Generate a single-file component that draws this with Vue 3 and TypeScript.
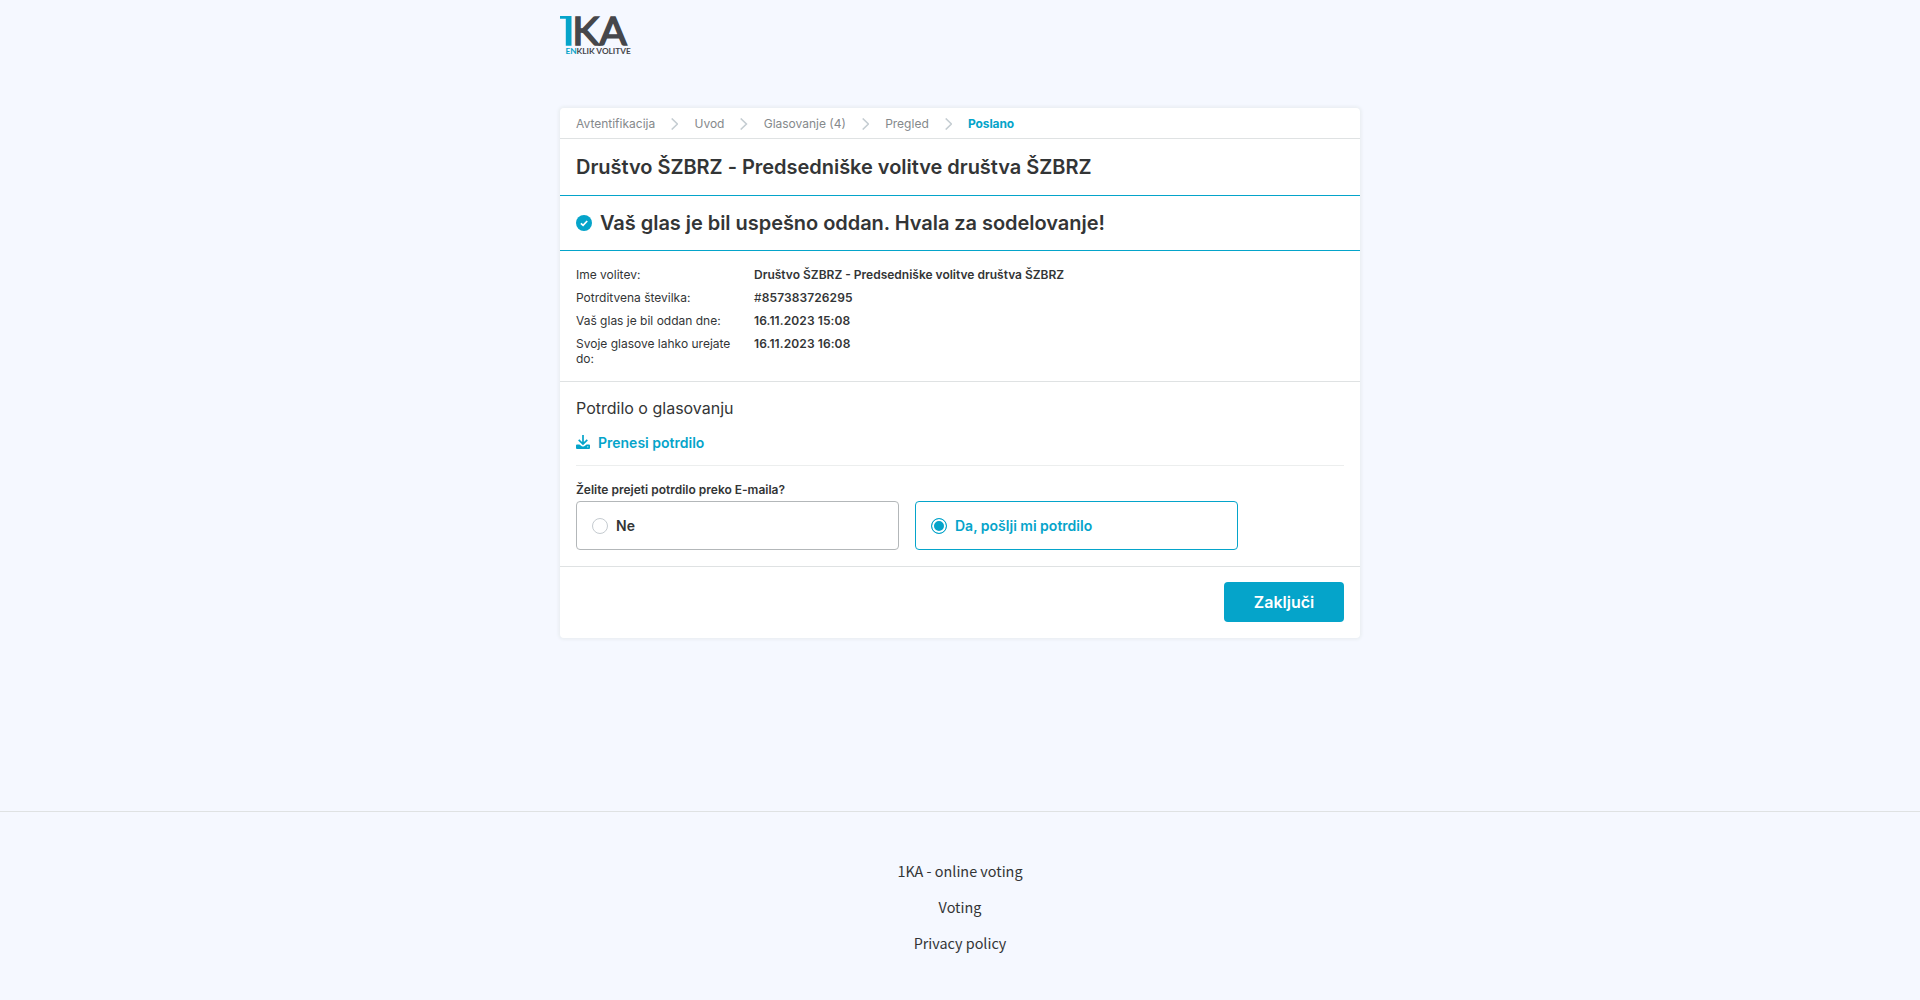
<template>
  <div class="page">
    <header class="header">
      <svg class="logo" width="72" height="42" viewBox="0 0 72 42" role="img" aria-label="1KA">
        <path d="M0 2h11.5v29.8H5.8V4.8H0z" fill="#05a4ca" />
        <text x="12.2" y="31.2" class="logo-main" textLength="54.5" lengthAdjust="spacingAndGlyphs">KA</text>
        <text x="5.4" y="40.2" class="logo-sub" textLength="65.4" lengthAdjust="spacingAndGlyphs"><tspan class="teal">EN</tspan>KLIK VOLITVE</text>
      </svg>
    </header>

    <main class="card">
      <nav class="steps">
        <template v-for="(step, idx) in steps" :key="step">
          <svg v-if="idx > 0" class="chevron" width="7.25" height="12" viewBox="0 0 7.25 12">
            <path d="M0.7 0.5L6.4 6L0.7 11.5" fill="none" stroke="#c5cdd2" stroke-width="1.6" />
          </svg>
          <span class="step" :class="{ active: step === currentStep }">{{ step }}</span>
        </template>
      </nav>

      <h1 class="title">{{ electionName }}</h1>

      <div class="success">
        <svg width="16" height="16" viewBox="0 0 16 16">
          <circle cx="8" cy="8" r="8" fill="#05a4ca" />
          <path d="M4.9 8.3L7.1 10.4L11.2 6" fill="none" stroke="#fff" stroke-width="1.7" />
        </svg>
        <span>Vaš glas je bil uspešno oddan. Hvala za sodelovanje!</span>
      </div>

      <dl class="details">
        <div v-for="row in details" :key="row.label" class="row">
          <dt>{{ row.label }}</dt>
          <dd :class="{ numeric: row.numeric }"><span v-if="row.prefix" class="prefix">{{ row.prefix }}</span>{{ row.value }}</dd>
        </div>
      </dl>

      <section class="receipt">
        <h2>Potrdilo o glasovanju</h2>
        <a class="download" href="#" @click.prevent>
          <svg width="14" height="14" viewBox="0 0 14 14">
            <path d="M7 0v8.6M2.7 4.9L7 9L11.3 4.9" fill="none" stroke="#05a4ca" stroke-width="1.7" />
            <path d="M1 9.4h2.4L5.8 11.2Q7 11.9 8.2 11.2L10.6 9.4H13Q14 9.4 14 10.4V13Q14 14 13 14H1Q0 14 0 13V10.4Q0 9.4 1 9.4z" fill="#05a4ca" />
            <circle cx="11.8" cy="11.8" r="0.6" fill="#fff" />
          </svg>
          <span>Prenesi potrdilo</span>
        </a>
        <div class="question">Želite prejeti potrdilo preko E-maila?</div>
        <div class="options">
          <label v-for="o in options" :key="o.value" class="option" :class="{ selected: answer === o.value }">
            <input v-model="answer" type="radio" name="email" :value="o.value" />
            <span class="radio"></span>
            <span>{{ o.label }}</span>
          </label>
        </div>
      </section>

      <div class="actions">
        <button type="button">Zaključi</button>
      </div>
    </main>

    <footer class="footer">
      <a v-for="link in links" :key="link" href="#" @click.prevent>{{ link }}</a>
    </footer>
  </div>
</template>

<script setup lang="ts">
import { ref } from 'vue'

interface Detail { label: string; value: string; prefix?: string; numeric?: boolean }
interface Option { value: string; label: string }

const electionName = 'Društvo ŠZBRZ - Predsedniške volitve društva ŠZBRZ'
const steps = ['Avtentifikacija', 'Uvod', 'Glasovanje (4)', 'Pregled', 'Poslano']
const currentStep = ref('Poslano')

const details: Detail[] = [
  { label: 'Ime volitev:', value: electionName },
  { label: 'Potrditvena številka:', prefix: '#', value: '857383726295', numeric: true },
  { label: 'Vaš glas je bil oddan dne:', value: '16.11.2023 15:08', numeric: true },
  { label: 'Svoje glasove lahko urejate do:', value: '16.11.2023 16:08', numeric: true }
]

const options: Option[] = [
  { value: 'no', label: 'Ne' },
  { value: 'yes', label: 'Da, pošlji mi potrdilo' }
]
const answer = ref('yes')

const links = ['1KA - online voting', 'Voting', 'Privacy policy']
</script>

<style>
body { margin: 0; background: #f5f8ff; }
</style>

<style scoped>
* { box-sizing: border-box; }
.page { height: 1000px; display: flex; flex-direction: column; font-family: Inter, "Liberation Sans", sans-serif; color: #333536; overflow: hidden; }
.header { width: 800px; height: 108px; margin: 0 auto; padding-top: 14px; flex: none; }
.logo { display: block; overflow: visible; }
.logo-main { font: 400 39.5px Lato, sans-serif; fill: #46474b; stroke: #46474b; stroke-width: 1.5; }
.logo-sub { font: 700 7.6px Lato, sans-serif; fill: #46474b; }
.logo-sub .teal { fill: #05a4ca; }

.card { width: 800px; height: 530px; margin: 0 auto; background: #fff; border-radius: 4px; box-shadow: 0 0 3px 2px #ebeff4; flex: none; }
.steps { height: 31px; padding: 1px 16px 0; display: flex; align-items: center; gap: 16px; border-bottom: 1px solid #dfe2e3; font-size: 12px; color: #85898c; }
.step { line-height: 16px; position: relative; top: 0.5px; }
.step.active { color: #05a4ca; font-weight: 700; letter-spacing: -0.1px; }
.title { margin: 0; height: 57px; padding: 0 16px; border-bottom: 1px solid #05a4ca; font-size: 20px; font-weight: 600; line-height: 56px; letter-spacing: -0.03px; }
.success { height: 55px; padding: 0 16px; display: flex; align-items: center; gap: 8px; border-bottom: 1px solid #05a4ca; font-size: 20px; font-weight: 600; letter-spacing: -0.045px; }

.details { margin: 0; height: 131px; padding: 16px 16px 0; border-bottom: 1px solid #dfe2e3; font-size: 12px; line-height: 15px; }
.row { display: flex; margin-bottom: 8px; }
.row dt { width: 162px; flex: none; margin-right: 16px; }
.row dd { margin: 0; font-weight: 600; }
.row .numeric { letter-spacing: 0.1px; }
.prefix { font-weight: 400; }

.receipt { height: 185px; padding: 16px 16px 0; border-bottom: 1px solid #dfe2e3; }
.receipt h2 { margin: 0; font-size: 16px; font-weight: 400; line-height: 20px; }
.download { display: flex; gap: 8px; height: 48px; padding-top: 16px; line-height: 17px; border-bottom: 1px solid #eceeee; color: #05a4ca; font-size: 14px; font-weight: 600; text-decoration: none; }
.download svg { margin-top: 1px; }
.question { margin-top: 16px; height: 19px; font-size: 12px; font-weight: 600; line-height: 15px; }
.options { display: flex; gap: 16px; }
.option { width: 323px; height: 49px; padding: 0 15px; display: flex; align-items: center; gap: 8px; border: 1px solid #b3b7b9; border-radius: 4px; font-size: 14px; font-weight: 600; }
.option input { display: none; }
.radio { width: 16px; height: 16px; border: 1px solid #c5cbd0; border-radius: 50%; }
.option.selected { border-color: #05a4ca; color: #05a4ca; }
.selected .radio { border-color: #05a4ca; background: #05a4ca; box-shadow: inset 0 0 0 2px #fff; }

.actions { display: flex; justify-content: flex-end; padding: 15px 16px; }
button { width: 120px; height: 40px; padding: 0; border: 0; border-radius: 4px; background: #05a4ca; color: #fff; font: 600 16px Inter, sans-serif; }

.footer { margin-top: auto; height: 189px; flex: none; padding-top: 47px; border-top: 1px solid #dfe2e3; display: flex; flex-direction: column; align-items: center; gap: 12px; }
.footer a { color: #333536; font: 400 14.4px/24px "Noto Sans CJK SC", sans-serif; text-decoration: none; }
</style>
